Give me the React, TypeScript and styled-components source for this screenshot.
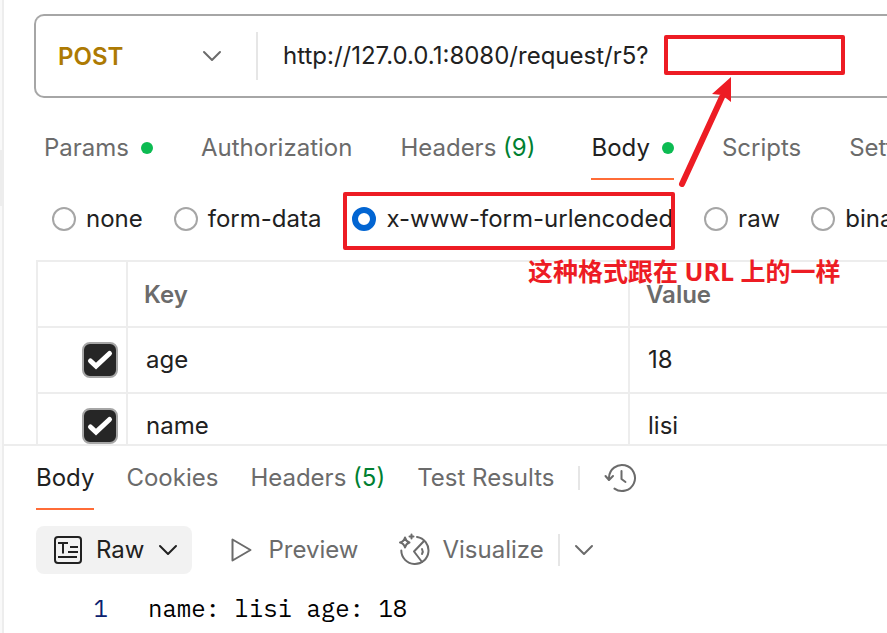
import React, { useState } from "react";
import styled, { createGlobalStyle } from "styled-components";

const GlobalStyle = createGlobalStyle`
  *, *::before, *::after { box-sizing: border-box; }
  body { margin: 0; background: #fff; overflow: hidden; }
  body, button, input, select {
    font-family: Inter, "Noto Sans CJK SC", sans-serif;
    font-size: 24px;
    line-height: 32px;
    color: #212121;
  }
`;

const Shell = styled.div`
  position: relative;
  display: flex;
  height: 100vh;
  overflow: hidden;
`;

const Rail = styled.div`
  flex: none;
  width: 4px;
  padding-top: 150px;
  background: #f9f9f9;
  border-right: 2px solid #ededed;
`;

const RailThumb = styled.div`
  height: 56px;
  background: #ededed;
`;

const Main = styled.main`
  flex: 1;
  min-width: 0;
  display: flex;
  flex-direction: column;
`;

const RequestPane = styled.section`
  flex: 1;
  min-height: 0;
  overflow: hidden;
  padding: 14px 0 0 30px;
`;

const ResponsePane = styled.section`
  flex: none;
  overflow: hidden;
  padding-left: 32px;
  border-top: 2px solid #ededed;
`;

const UrlBar = styled.div`
  display: flex;
  align-items: center;
  height: 84px;
  border: 2px solid #a6a6a6;
  border-right: none;
  border-radius: 10px 0 0 10px;
`;

const MethodBox = styled.div`
  flex: none;
  display: grid;
  align-items: center;
  width: 222px;
  height: 48px;
  border-right: 2px solid #e6e6e6;
  color: #6b6b6b;
  > * { grid-area: 1 / 1; }
  > svg { justify-self: end; margin-right: 34px; pointer-events: none; }
`;

const MethodSelect = styled.select`
  appearance: none;
  width: 100%;
  height: 48px;
  padding: 2px 0 0 22px;
  border: none;
  background: transparent;
  font-weight: 600;
  color: #ad7a03;
`;

const UrlInput = styled.input`
  flex: 1;
  min-width: 0;
  height: 48px;
  padding: 0 24px 2px 25px;
  border: none;
  outline: none;
  background: transparent;
`;

const Tabs = styled.div<{ $gap: number }>`
  display: flex;
  align-items: center;
  gap: ${(p) => p.$gap}px;
  white-space: nowrap;
`;

const RequestTabs = styled(Tabs)`
  height: 82px;
  padding: 18px 0 0 10px;
`;

const ResponseTabs = styled(Tabs)`
  height: 64px;
`;

const Tab = styled.button<{ $active?: boolean; $roomy?: boolean }>`
  flex: none;
  display: flex;
  align-items: center;
  height: 64px;
  padding: 2px ${(p) => (p.$roomy ? 8 : 0)}px 0 0;
  border: none;
  border-bottom: 2px solid ${(p) => (p.$active ? "#ff6c37" : "transparent")};
  background: none;
  color: ${(p) => (p.$active ? "#212121" : "#6b6b6b")};
  white-space: pre;
`;

const Count = styled.span`
  color: #007f31;
`;

const Dot = styled.span`
  width: 12px;
  height: 12px;
  margin-left: 12px;
  border-radius: 50%;
  background: #0cbb52;
`;

const Divider = styled.span<{ $h: number }>`
  flex: none;
  width: 2px;
  height: ${(p) => p.$h}px;
  background: #e6e6e6;
`;

const IconButton = styled.button`
  flex: none;
  display: flex;
  padding: 0;
  border: none;
  background: none;
  color: #6b6b6b;
`;

const BodyTypes = styled.div`
  display: flex;
  align-items: center;
  gap: 31px;
  height: 80px;
  padding: 0 0 2px 18px;
  white-space: nowrap;
`;

const RadioLabel = styled.label`
  flex: none;
  display: flex;
  align-items: center;
  gap: 10px;
`;

const Radio = styled.input`
  appearance: none;
  flex: none;
  width: 24px;
  height: 24px;
  margin: 0;
  border: 2px solid #a6a6a6;
  border-radius: 50%;
  background: #fff;
  &:checked { border: 6px solid #0265d2; }
`;

const TableWrap = styled.div`
  padding-left: 2px;
`;

const Table = styled.table`
  width: 100%;
  table-layout: fixed;
  border-collapse: separate;
  border-spacing: 0;
  border-top: 2px solid #ededed;
  border-left: 2px solid #ededed;
  th, td {
    border-right: 2px solid #ededed;
    border-bottom: 2px solid #ededed;
  }
  th:last-child, td:last-child { border-right: none; }
`;

const Head = styled.th<{ $w?: string }>`
  width: ${(p) => p.$w ?? "auto"};
  height: 66px;
  padding: 2px 16px 0;
  text-align: left;
  font-weight: 600;
  color: #6b6b6b;
`;

const Cell = styled.td`
  height: 66px;
  padding: 0 8px 0 16px;
`;

const CellInput = styled.input`
  display: block;
  width: 100%;
  height: 48px;
  padding: 0 0 2px 2px;
  border: none;
  outline: none;
  background: transparent;
`;

const CheckBox = styled.label`
  display: grid;
  width: 36px;
  height: 36px;
  margin-left: auto;
  > * { grid-area: 1 / 1; }
  > svg { pointer-events: none; }
`;

const CheckInput = styled.input`
  appearance: none;
  width: 36px;
  height: 36px;
  margin: 0;
  border: 2px solid #a6a6a6;
  border-radius: 8px;
  background: #fff;
  &:checked { background: #262626; }
`;

const Toolbar = styled.div`
  display: flex;
  align-items: center;
  height: 48px;
  margin-top: 16px;
  white-space: nowrap;
`;

const ViewTabs = styled(Tabs)`
  margin-left: 20px;
`;

const ViewButton = styled.button<{ $active?: boolean; $gap: number }>`
  flex: none;
  display: flex;
  align-items: center;
  gap: ${(p) => p.$gap}px;
  height: 48px;
  padding: 0 14px 0 18px;
  border: none;
  border-radius: 8px;
  background: ${(p) => (p.$active ? "#f2f2f2" : "transparent")};
  color: ${(p) => (p.$active ? "#212121" : "#6b6b6b")};
`;

const CodeLine = styled.div`
  display: flex;
  height: 59px;
  padding-top: 18px;
  font-family: "IBM Plex Mono", "Liberation Mono", monospace;
  color: #000;
  white-space: pre;
`;

const LineNumber = styled.span`
  width: 72px;
  margin-right: 40px;
  text-align: right;
  color: #0b216f;
`;

const Marks = styled.svg`
  position: absolute;
  top: 0;
  left: 0;
  pointer-events: none;
`;

const Caption = styled.div`
  position: absolute;
  top: 255px;
  left: 528px;
  font-family: "Open Sans", "Noto Sans CJK SC", sans-serif;
  font-size: 25px;
  font-weight: 700;
  color: #ed1c24;
  white-space: nowrap;
`;

const Chevron = () => (
  <svg width="20" height="12" viewBox="0 0 20 12" fill="none" stroke="currentColor" strokeWidth="2" strokeLinecap="round" strokeLinejoin="round">
    <path d="M2 2l8 8 8-8" />
  </svg>
);

const CheckMark = () => (
  <svg width="36" height="36" viewBox="0 0 36 36" fill="none" stroke="#fff" strokeWidth="5" strokeLinecap="round" strokeLinejoin="miter">
    <path d="M8.500 19l5.500 5L27.500 11.500" />
  </svg>
);

const HistoryIcon = () => (
  <svg width="34" height="32" viewBox="0 0 34 32" fill="none" stroke="currentColor" strokeWidth="2" strokeLinecap="round" strokeLinejoin="round">
    <path d="M5 17.500V15.500a13 13 0 1 1 5.500 11.100" />
    <path d="M1.500 14l3.500 4 4-4" />
    <path d="M17.500 9v8l4 3" />
  </svg>
);

const RawIcon = () => (
  <svg width="28" height="28" viewBox="0 0 28 28" fill="none" stroke="currentColor" strokeWidth="2">
    <rect x="1" y="1" width="26" height="26" rx="3" />
    <path d="M4 7h10M9 7v10.500M16 11h8M14 16h10M4 21h19" />
  </svg>
);

const PlayIcon = () => (
  <svg width="22" height="26" viewBox="0 0 22 26" fill="none" stroke="currentColor" strokeWidth="2" strokeLinejoin="round">
    <path d="M2.500 2.500v21l18-10.500z" />
  </svg>
);

const VisualizeIcon = () => (
  <svg width="32" height="34" viewBox="0 0 32 34" fill="none" stroke="currentColor" strokeWidth="2" strokeLinecap="round" strokeLinejoin="round">
    <path d="M3.300 17.500A13.600 13.600 0 1 0 19 4" />
    <path d="M26 8L16 18.500 24 29" />
    <path d="M24 16q1.500 2.500 0 5" />
    <path d="M7 4.500q1 4 4.500 5-3.500 1-4.500 5-1-4-5-5 4-1 5-5z" />
    <path d="M13.500 1.500v4M11.500 3.500h4" />
  </svg>
);

const bodyTypes = ["none", "form-data", "x-www-form-urlencoded", "raw", "binary"];
const fields = [
  { key: "age", value: "18" },
  { key: "name", value: "lisi" },
];

export default function App() {
  const [bodyType, setBodyType] = useState("x-www-form-urlencoded");
  return (
    <Shell>
      <GlobalStyle />
      <Rail>
        <RailThumb />
      </Rail>
      <Main>
        <RequestPane>
          <UrlBar>
            <MethodBox>
              <MethodSelect aria-label="Method" defaultValue="POST">
                <option>POST</option>
                <option>GET</option>
              </MethodSelect>
              <Chevron />
            </MethodBox>
            <UrlInput aria-label="Request URL" defaultValue="http://127.0.0.1:8080/request/r5?" />
          </UrlBar>
          <RequestTabs $gap={48}>
            <Tab>Params<Dot /></Tab>
            <Tab>Authorization</Tab>
            <Tab $roomy>Headers <Count>(9)</Count></Tab>
            <Tab $active>Body<Dot /></Tab>
            <Tab>Scripts</Tab>
            <Tab>Settings</Tab>
          </RequestTabs>
          <BodyTypes>
            {bodyTypes.map((type) => (
              <RadioLabel key={type}>
                <Radio type="radio" name="body-type" checked={bodyType === type} onChange={() => setBodyType(type)} />
                {type}
              </RadioLabel>
            ))}
          </BodyTypes>
          <TableWrap>
            <Table>
              <thead>
                <tr>
                  <Head $w="90px" />
                  <Head $w="502px">Key</Head>
                  <Head>Value</Head>
                </tr>
              </thead>
              <tbody>
                {fields.map((f) => (
                  <tr key={f.key}>
                    <Cell>
                      <CheckBox>
                        <CheckInput type="checkbox" defaultChecked aria-label={`Use ${f.key}`} />
                        <CheckMark />
                      </CheckBox>
                    </Cell>
                    <Cell><CellInput aria-label="Key" defaultValue={f.key} /></Cell>
                    <Cell><CellInput aria-label="Value" defaultValue={f.value} /></Cell>
                  </tr>
                ))}
              </tbody>
            </Table>
          </TableWrap>
        </RequestPane>
        <ResponsePane>
          <ResponseTabs $gap={24}>
            <Tabs $gap={32}>
              <Tab $active>Body</Tab>
              <Tab>Cookies</Tab>
              <Tab>Headers <Count>(5)</Count></Tab>
              <Tab>Test Results</Tab>
            </Tabs>
            <Divider $h={24} />
            <IconButton aria-label="History"><HistoryIcon /></IconButton>
          </ResponseTabs>
          <Toolbar>
            <ViewButton $active $gap={14}><RawIcon />Raw<Chevron /></ViewButton>
            <ViewTabs $gap={8}>
              <ViewButton $gap={16}><PlayIcon />Preview</ViewButton>
              <ViewButton $gap={12}><VisualizeIcon />Visualize</ViewButton>
            </ViewTabs>
            <Tabs $gap={14}>
              <Divider $h={32} />
              <IconButton aria-label="More views"><Chevron /></IconButton>
            </Tabs>
          </Toolbar>
          <CodeLine>
            <LineNumber>1</LineNumber>
            <span>name: lisi age: 18</span>
          </CodeLine>
        </ResponsePane>
      </Main>
      <Marks width="887" height="300" viewBox="0 0 887 300" fill="none" stroke="#ed1c24" strokeWidth="4" strokeLinejoin="round">
        <rect x="666" y="37" width="177" height="36" />
        <rect x="345" y="194" width="328" height="54" />
        <path d="M682 184L722 97" strokeWidth="6" strokeLinecap="round" />
        <path d="M731 77L712 94L722 95L731 102Z" fill="#ed1c24" stroke="none" />
      </Marks>
      <Caption>这种格式跟在 URL 上的一样</Caption>
    </Shell>
  );
}
